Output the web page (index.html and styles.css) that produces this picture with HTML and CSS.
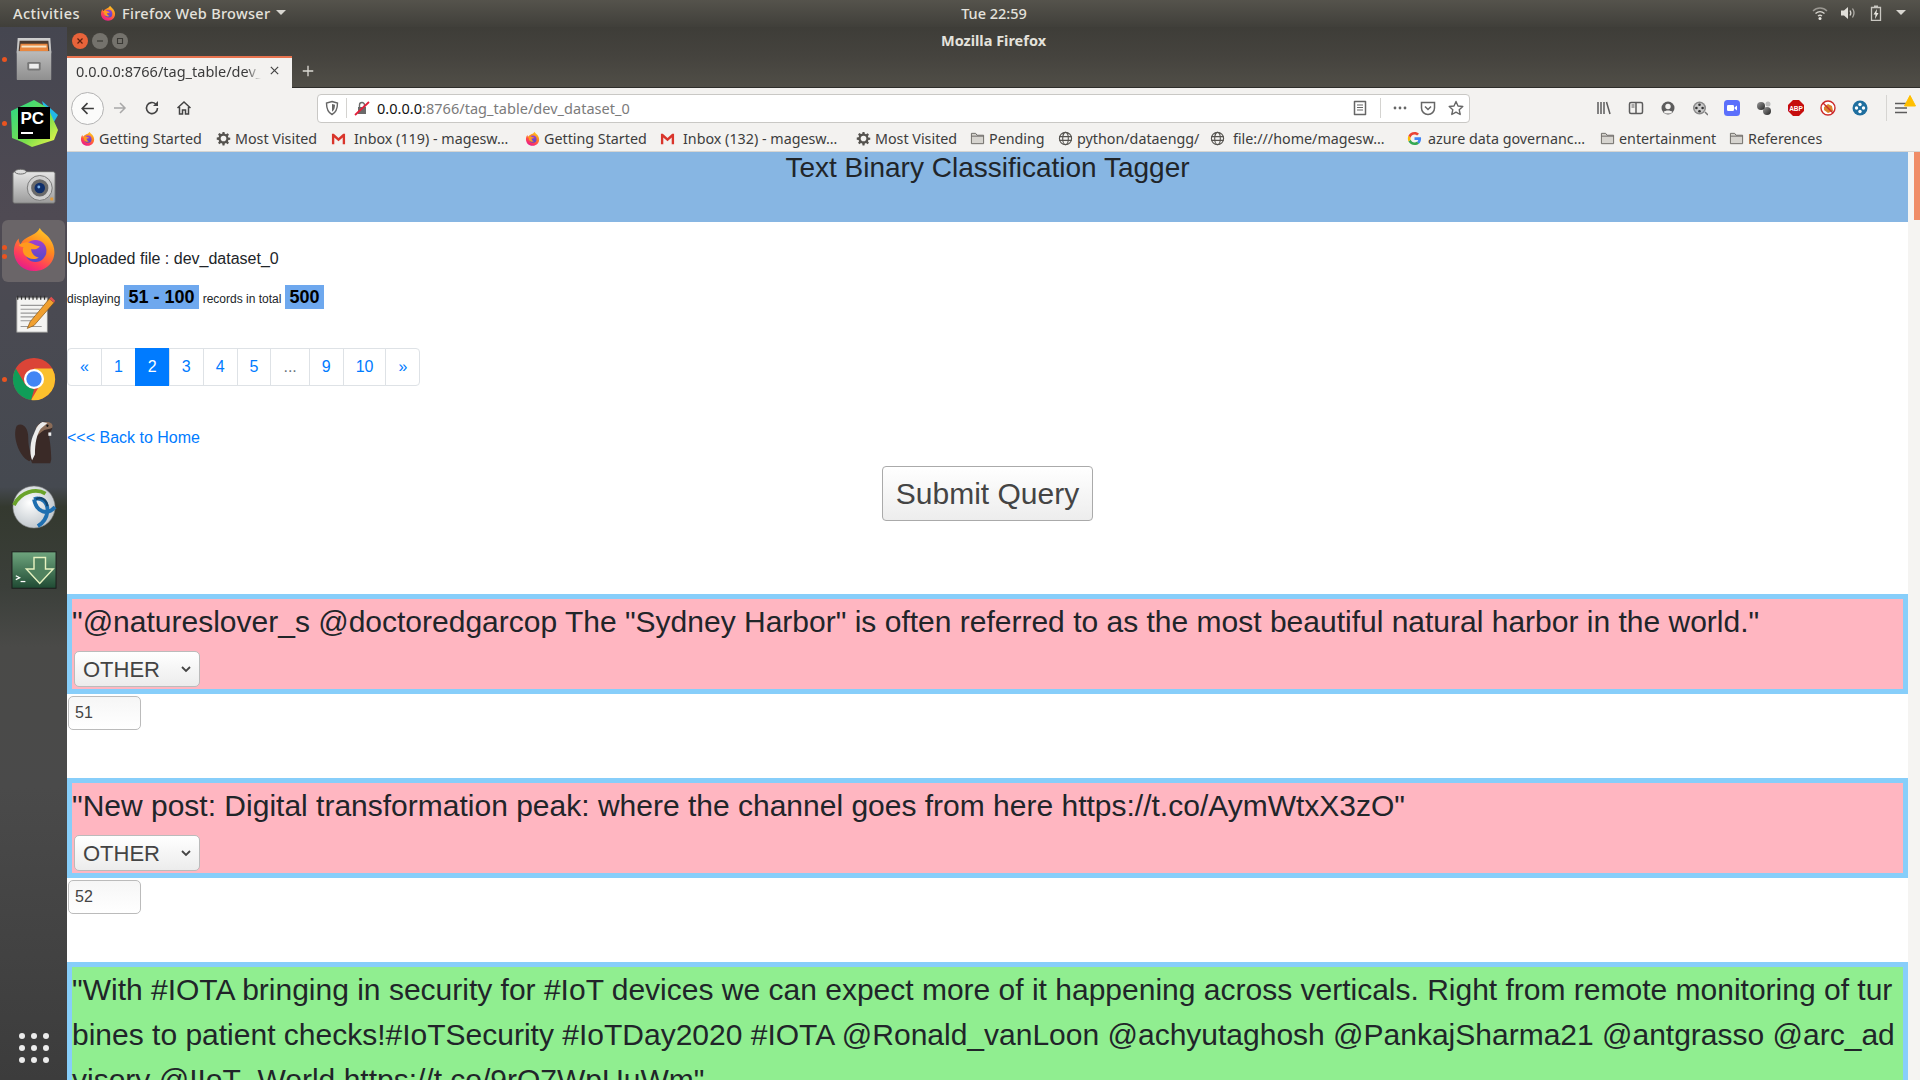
FILE: index.html
```html
<!DOCTYPE html>
<html lang="en">
<head>
<meta charset="utf-8">
<title>Mozilla Firefox</title>
<link rel="stylesheet" href="styles.css">
</head>
<body>
<svg class="defs" aria-hidden="true">
  <defs>
    <linearGradient id="ffBody" x1="0.8" y1="0" x2="0.3" y2="1"><stop offset="0" stop-color="#ffd02c"/><stop offset="0.4" stop-color="#ff8a1e"/><stop offset="0.75" stop-color="#ff3d5c"/><stop offset="1" stop-color="#e31b8e"/></linearGradient>
    <linearGradient id="ffCore" x1="0.5" y1="0" x2="0.5" y2="1"><stop offset="0" stop-color="#a13fd0"/><stop offset="1" stop-color="#4f4bc8"/></linearGradient>
    <linearGradient id="pcBg" x1="0" y1="0" x2="1" y2="1"><stop offset="0" stop-color="#21d789"/><stop offset="0.6" stop-color="#7ee04c"/><stop offset="1" stop-color="#fcf84a"/></linearGradient>
    <linearGradient id="cab" x1="0" y1="0" x2="0" y2="1"><stop offset="0" stop-color="#cfcfcf"/><stop offset="1" stop-color="#8f8f8f"/></linearGradient>
    <linearGradient id="cam" x1="0" y1="0" x2="0" y2="1"><stop offset="0" stop-color="#e6e6e6"/><stop offset="1" stop-color="#9a9a9a"/></linearGradient>
    <linearGradient id="term" x1="0" y1="0" x2="0" y2="1"><stop offset="0" stop-color="#6fa57e"/><stop offset="1" stop-color="#1f4a33"/></linearGradient>
    <linearGradient id="ball" x1="0" y1="0" x2="1" y2="1"><stop offset="0" stop-color="#9a9a9a"/><stop offset="1" stop-color="#222"/></linearGradient>
    <radialGradient id="glob" cx="0.4" cy="0.4" r="0.7"><stop offset="0" stop-color="#fff"/><stop offset="1" stop-color="#b8c0c6"/></radialGradient>
    <symbol id="firefox" viewBox="0 0 48 48">
      <path d="M30 2c3 5 8 7 11 12 5 7 6 17 1 24-4 6-11 9-18 9C12 47 3 38 3 26c0-5 2-10 5-13 0 3 1 5 2 6 2-4 5-6 9-8 3-2 8-3 11-9z" fill="url(#ffBody)"/>
      <circle cx="25.500" cy="26" r="11.500" fill="url(#ffCore)"/>
      <path d="M8 20c4-3 9-4 13-2 3 1 5 3 9 3-2 3-6 4-9 3 0 4 3 8 8 9-5 3-12 1-15-3-2-3-2-6-1-8-2 0-4-1-5-2z" fill="#ff9a1e"/>
    </symbol>
    <symbol id="gear" viewBox="0 0 16 16">
      <path fill="#55534f" d="M7 1h2l.4 2 1.300.5 1.700-1.100 1.400 1.400-1.100 1.700.5 1.300 2 .4v2l-2 .4-.5 1.300 1.100 1.700-1.400 1.400-1.700-1.100-1.300.5-.4 2H7l-.4-2-1.300-.5-1.700 1.100-1.400-1.400 1.100-1.700-.5-1.300-2-.4V7l2-.4.5-1.300-1.100-1.700 1.400-1.400 1.700 1.100 1.300-.5z"/>
      <circle cx="8" cy="8" r="3" fill="#f3f2f0"/>
    </symbol>
    <symbol id="gmail" viewBox="0 0 16 16">
      <path fill="#f3f2f0" d="M1 3h14v11H1z"/>
      <path fill="#d9352b" d="M1 3h2l5 4.500L13 3h2v11h-2.500V7L8 11 3.500 7v7H1z"/>
    </symbol>
    <symbol id="folder" viewBox="0 0 16 16">
      <path fill="#d6d4cf" stroke="#6b6964" d="M1.500 13.500v-11h4.500l1.500 2h7v9z"/>
      <path fill="none" stroke="#6b6964" d="M1.500 5.500h13"/>
    </symbol>
    <symbol id="globe" viewBox="0 0 16 16">
      <g fill="none" stroke="#55534f" stroke-width="1.200"><circle cx="8" cy="8" r="6.500"/><ellipse cx="8" cy="8" rx="3" ry="6.500"/><path d="M1.500 6h13M1.500 10h13"/></g>
    </symbol>
    <symbol id="google" viewBox="0 0 16 16">
      <path fill="#4285f4" d="M15 8.200c0-.6 0-1-.1-1.500H8v2.800h4c-.2 1-.7 1.700-1.500 2.300l2.300 1.800C14.200 12.300 15 10.400 15 8.200z"/>
      <path fill="#34a853" d="M8 15c2 0 3.600-.6 4.800-1.800L10.500 11.500c-.6.400-1.500.7-2.500.7-1.900 0-3.500-1.300-4.100-3L1.500 11c1.200 2.400 3.600 4 6.500 4z"/>
      <path fill="#fbbc05" d="M3.900 9.200C3.600 8.300 3.600 7.500 3.900 6.700L1.500 5c-.8 1.700-.8 3.900 0 6z"/>
      <path fill="#ea4335" d="M8 3.800c1.100 0 2 .4 2.800 1.100l2-2C11.600 1.700 10 1 8 1 5.100 1 2.700 2.600 1.500 5l2.400 1.800C4.500 5 6.100 3.800 8 3.800z"/>
    </symbol>
  </defs>
</svg>

<header class="topbar">
  <span class="activities">Activities</span>
  <span class="appmenu">
    <svg class="ico16" viewBox="0 0 16 16"><use href="#firefox"/></svg>
    <span>Firefox Web Browser</span>
    <span class="caret"></span>
  </span>
  <span class="clock">Tue 22:59</span>
  <span class="tray">
    <svg class="tray-ico" viewBox="0 0 16 16"><g fill="none" stroke="#d8d6d0" stroke-width="1.400"><path d="M1 6c4-4 10-4 14 0" opacity=".55"/><path d="M3.500 8.500c3-2.500 6-2.500 9 0"/><path d="M6 11c1.300-1 2.700-1 4 0"/></g><circle cx="8" cy="13.500" r="1.500" fill="#e8e6e0"/></svg>
    <svg class="tray-ico" viewBox="0 0 16 16"><path fill="#e0ded8" d="M1 5.500h3L8 2v12l-4-3.500H1z"/><g fill="none" stroke="#d8d6d0" stroke-width="1.300"><path d="M10 5.500c1 1.500 1 3.500 0 5"/><path d="M12.500 3.500c2 3 2 6 0 9" opacity=".7"/></g></svg>
    <svg class="tray-ico" viewBox="0 0 16 16"><path fill="none" stroke="#c9c7c1" stroke-width="1.300" d="M3.500 2.500h9v13h-9z"/><path fill="#c9c7c1" d="M6 .5h4v2H6z"/><path fill="#e8e6e0" d="M9 4L5.500 9.500h2L7 14l3.500-6h-2z"/></svg>
    <span class="caret"></span>
  </span>
</header>

<div class="desktop">
  <nav class="dock">
    <div class="dock-item">
      <svg class="dock-ico" viewBox="0 0 48 48"><path fill="url(#cab)" d="M7 2h34l1 14v29a1 1 0 0 1-1 1H7a1 1 0 0 1-1-1V16z"/><path fill="#4a3a30" d="M9 5h30l1 11H8z"/><path fill="#e9873f" d="M10 8h28l1 8H9z"/><path fill="#f6e4c8" d="M11 10h26v2H11z"/><path fill="#b9b9b9" d="M6 16h36v2H6z"/><rect x="17" y="27" width="14" height="9" rx="1.500" fill="#777"/><rect x="19" y="29" width="10" height="5" fill="#eee"/></svg>
      <span class="run-dot"></span>
    </div>
    <div class="dock-item">
      <svg class="dock-ico dock-ico-big" viewBox="0 0 52 52"><path fill="#22b8e8" d="M34 4l16 14-8 14z"/><path fill="url(#pcBg)" d="M3 14L26 3l14 8 10 22-4 10-22 7-10-5-10-4z"/><rect x="10" y="10" width="32" height="32" fill="#000"/><text class="pc-text" x="12.500" y="27">PC</text><rect x="13" y="35" width="12" height="2" fill="#fff"/></svg>
      <span class="run-dot"></span>
    </div>
    <div class="dock-item">
      <svg class="dock-ico" viewBox="0 0 48 48"><rect x="2" y="8" width="44" height="33" rx="2" fill="url(#cam)" stroke="#666"/><ellipse cx="10" cy="8" rx="6" ry="2.500" fill="#ddd" stroke="#666"/><circle cx="30" cy="25" r="13" fill="#cfcfcf" stroke="#777"/><circle cx="30" cy="25" r="9" fill="#6a6a6a"/><circle cx="30" cy="25" r="5.500" fill="#0f2f6b"/><circle cx="29" cy="24" r="1.500" fill="#7ab0e8"/><rect x="41" y="35" width="3" height="3" fill="#e09a3a"/></svg>
    </div>
    <div class="dock-item dock-active">
      <svg class="dock-ico" viewBox="0 0 48 48"><use href="#firefox"/></svg>
      <span class="run-dot dot-a"></span>
      <span class="run-dot dot-b"></span>
    </div>
    <div class="dock-item">
      <svg class="dock-ico" viewBox="0 0 48 48"><path fill="#f4f4f2" stroke="#888" d="M6 6h32v36H6z"/><path d="M7 4v4M11 4v4M15 4v4M19 4v4M23 4v4M27 4v4M31 4v4M35 4v4" stroke="#333" stroke-width="1.300"/><path d="M10 14h24M10 18h20M10 22h24M10 26h16M10 30h12M10 36h22" stroke="#999" stroke-width="1.200"/><path fill="#f0a030" stroke="#805010" stroke-width=".7" d="M40 7l5 4-21 24-7 3 3-7z"/><path fill="#e05050" d="M40 7l2-2 4 4-1 2z"/></svg>
    </div>
    <div class="dock-item">
      <svg class="dock-ico" viewBox="0 0 48 48"><circle cx="24" cy="24" r="22" fill="#db4437"/><path fill="#fbc02d" d="M24 13h19a22 22 0 0 1-22 33l10-17z"/><path fill="#0f9d58" d="M5 13l10 17 9 5-3 11A22 22 0 0 1 5 13z"/><circle cx="24" cy="24" r="10.500" fill="#fff"/><circle cx="24" cy="24" r="8" fill="#4285f4"/></svg>
      <span class="run-dot"></span>
    </div>
    <div class="dock-item">
      <svg class="dock-ico" viewBox="0 0 48 48"><path fill="#3a2a27" d="M6 6c6-4 12 2 12 12 0 8 1 14 5 22l-4 3C8 38 1 16 6 6z"/><path fill="#3a2a27" d="M22 45c-4-8-2-21 2-29 2-5 3-12 8-14 5-1 10 1 11 6 0 3-3 5-4 6 2 8 3 20 3 27l-1 4z"/><path fill="#8a6c58" d="M26 8c3-5 8-6 13-6 4 1 5 3 4 6-3 2-7 1-9 3-3 2-6 5-8 6z"/><path fill="#ececec" d="M33 2l5 1-7 6c-4 6-6 14-6 27l-3 6c-3-8-2-20 2-28 2-5 4-10 9-12z"/><rect x="39" y="13" width="3" height="3.500" fill="#f0f0f0"/><circle cx="38" cy="6" r="1.200" fill="#111"/></svg>
    </div>
    <div class="dock-item">
      <svg class="dock-ico" viewBox="0 0 48 48"><circle cx="24" cy="24" r="22" fill="url(#glob)" stroke="#777" stroke-width=".6"/><path fill="none" stroke="#6aa32a" stroke-width="4" d="M3 22C10 8 26 4 36 10"/><path fill="none" stroke="#1f6fb0" stroke-width="4" d="M24 16c7-3 15 3 14 13-1 8-5 12-10 15M46 24C38 33 27 30 24 16"/><path fill="none" stroke="#14456e" stroke-width="2.500" d="M26 16c4-3 11-1 12 7"/></svg>
    </div>
    <div class="dock-item">
      <svg class="dock-ico" viewBox="0 0 48 48"><rect x="1" y="4" width="46" height="38" fill="url(#term)" stroke="#1b1b1b"/><path fill="#50825f" stroke="#e6f2c0" stroke-width="1.500" d="M24 10h12v12h8L30 37 16 22h8z"/><path d="M5 29l4 2-4 2" fill="none" stroke="#fff" stroke-width="1.300"/><path d="M10 35h5" stroke="#fff" stroke-width="1.300"/></svg>
    </div>
    <div class="apps-grid">
      <i></i><i></i><i></i><i></i><i></i><i></i><i></i><i></i><i></i>
    </div>
  </nav>

  <div class="window">
    <div class="titlebar">
      <div class="winbtns">
        <span class="winbtn winbtn-close"><svg viewBox="0 0 16 16"><path d="M5.500 5.500l5 5M10.500 5.500l-5 5" stroke="#5a2010" stroke-width="1.200"/></svg></span>
        <span class="winbtn"><svg viewBox="0 0 16 16"><path d="M5 8h6" stroke="#3a3935" stroke-width="1.200"/></svg></span>
        <span class="winbtn"><svg viewBox="0 0 16 16"><path d="M5.500 5.500h5v5h-5z" fill="none" stroke="#3a3935" stroke-width="1.100"/></svg></span>
      </div>
      <span class="wintitle">Mozilla Firefox</span>
    </div>
    <div class="tabbar">
      <div class="tab">
        <span class="tab-label">0.0.0.0:8766/tag_table/dev_</span>
        <svg class="tab-x" viewBox="0 0 12 12"><path d="M2 2l8 8M10 2l-8 8" stroke="#444" stroke-width="1.300"/></svg>
      </div>
      <svg class="newtab" viewBox="0 0 16 16"><path d="M8 2v12M2 8h12" stroke="#dcdad4" stroke-width="1.500"/></svg>
    </div>
    <div class="navbar">
      <span class="backbtn"><svg viewBox="0 0 16 16"><path d="M14 8H3M8 3L3 8l5 5" fill="none" stroke="#3d3d3d" stroke-width="1.500"/></svg></span>
      <svg class="nav-ico" viewBox="0 0 16 16"><path d="M2 8h11M8 3l5 5-5 5" fill="none" stroke="#a8a8a8" stroke-width="1.500"/></svg>
      <svg class="nav-ico nav-reload" viewBox="0 0 16 16"><path d="M13.500 8a5.500 5.500 0 1 1-1.800-4" fill="none" stroke="#444" stroke-width="1.600"/><path d="M14 1v5H9z" fill="#444"/></svg>
      <svg class="nav-ico nav-home" viewBox="0 0 16 16"><path d="M1.500 8L8 2l6.500 6M3.500 7v7h3v-4h3v4h3V7" fill="none" stroke="#444" stroke-width="1.500"/></svg>
      <div class="urlbar">
        <svg class="url-ico url-shield" viewBox="0 0 16 16"><path d="M8 1.500l5.500 1.500c0 6-1.500 9.500-5.500 11.500C4 12.500 2.500 9 2.500 3z" fill="none" stroke="#666" stroke-width="1.400"/><path d="M8 4l3 .8c0 3.500-.8 5.500-3 7z" fill="#666"/></svg>
        <span class="url-sep"></span>
        <svg class="url-ico" viewBox="0 0 16 16"><path d="M4 7h8v7H4z" fill="#6a6a6a"/><path d="M5.500 7V5a2.500 2.500 0 0 1 5 0v2" fill="none" stroke="#6a6a6a" stroke-width="1.400"/><path d="M1 15L15 2" stroke="#e2203a" stroke-width="1.800"/></svg>
        <span class="url-text"><b>0.0.0.0</b>:8766/tag_table/dev_dataset_0</span>
        <svg class="url-ico" viewBox="0 0 16 16"><path d="M2.500 1.500h11v13h-11z" fill="none" stroke="#666" stroke-width="1.500" stroke-linejoin="round"/><path d="M5 5h6M5 7.500h6M5 10h6" stroke="#666" stroke-width="1.100"/></svg>
        <span class="url-sep url-sep-r"></span>
        <svg class="url-ico url-dots" viewBox="0 0 16 16"><circle cx="3" cy="8" r="1.400" fill="#666"/><circle cx="8" cy="8" r="1.400" fill="#666"/><circle cx="13" cy="8" r="1.400" fill="#666"/></svg>
        <svg class="url-ico url-pocket" viewBox="0 0 16 16"><path d="M1.500 2.500h13V8a6.500 6.500 0 0 1-13 0z" fill="none" stroke="#666" stroke-width="1.500"/><path d="M5 6.500l3 3 3-3" fill="none" stroke="#666" stroke-width="1.500"/></svg>
        <svg class="url-ico url-star" viewBox="0 0 16 16"><path d="M8 1.500l2 4.500 4.800.5-3.600 3.200 1 4.800L8 12.100l-4.200 2.400 1-4.800L1.200 6.500 6 6z" fill="none" stroke="#666" stroke-width="1.400" stroke-linejoin="round"/></svg>
      </div>
      <div class="tools">
        <svg class="tool" viewBox="0 0 16 16"><path d="M2 2v12M5 2v12M8 2v12M10.500 2l3.500 12" stroke="#5c5c5c" stroke-width="1.500" fill="none"/></svg>
        <svg class="tool" viewBox="0 0 16 16"><rect x="1.500" y="2.500" width="13" height="11" rx="1.500" fill="none" stroke="#5c5c5c" stroke-width="1.500"/><path d="M8 3v10" stroke="#5c5c5c" stroke-width="1.500"/><path d="M3.500 5h3M3.500 7h3" stroke="#5c5c5c"/></svg>
        <svg class="tool" viewBox="0 0 16 16"><circle cx="8" cy="8" r="6.500" fill="#5c5c5c"/><circle cx="8" cy="6.500" r="2.700" fill="#f3f2f0"/><path d="M3.500 12c2-2 7-2 9 0l-2 1.500H5.500z" fill="#f3f2f0"/></svg>
        <svg class="tool" viewBox="0 0 16 16"><path d="M13 12l3 3" stroke="#777" stroke-width="1.500"/><circle cx="7.500" cy="8" r="6.500" fill="#8a8a8a"/><circle cx="7.500" cy="8" r="5" fill="#c9c9c9"/><g fill="#333"><circle cx="7.500" cy="4.800" r="1.300"/><circle cx="7.500" cy="11.200" r="1.300"/><circle cx="4.400" cy="8" r="1.300"/><circle cx="10.600" cy="8" r="1.300"/></g></svg>
        <svg class="tool" viewBox="0 0 16 16"><rect width="16" height="16" rx="3.500" fill="#5b6ffb"/><rect x="3" y="5" width="7" height="6" rx="1.200" fill="#fff"/><path d="M10.500 7.500L13 5.500v5l-2.500-2z" fill="#fff"/></svg>
        <svg class="tool" viewBox="0 0 16 16"><circle cx="12" cy="4" r="2.500" fill="#bbb"/><circle cx="11" cy="11" r="4" fill="url(#ball)"/><circle cx="5" cy="6" r="4" fill="url(#ball)"/></svg>
        <svg class="tool" viewBox="0 0 16 16"><path d="M5 0h6l5 5v6l-5 5H5l-5-5V5z" fill="#c60d0d"/><text class="abp-text" x="8" y="10.800">ABP</text></svg>
        <svg class="tool" viewBox="0 0 16 16"><circle cx="8" cy="8" r="7" fill="#fff" stroke="#cc2a2a" stroke-width="1.400"/><path d="M4 7l4-3 4 2 1 5-5 2-4-3z" fill="#d9822b"/><path d="M3 3l10 10" stroke="#cc2a2a" stroke-width="1.400"/></svg>
        <svg class="tool" viewBox="0 0 16 16"><circle cx="8" cy="8" r="7.500" fill="#1f6f9f"/><g fill="#fff"><circle cx="8" cy="4.500" r="1.700"/><circle cx="8" cy="11.500" r="1.700"/><circle cx="4.500" cy="8" r="1.700"/><circle cx="11.500" cy="8" r="1.700"/></g></svg>
        <span class="tool-sep"></span>
        <span class="menu-wrap">
          <svg class="tool" viewBox="0 0 16 16"><path d="M2 3.500h12M2 8h12M2 12.500h12" stroke="#5c5c5c" stroke-width="1.700"/></svg>
          <svg class="warn" viewBox="0 0 12 12"><path d="M6 .5l5.500 10.500H.5z" fill="#ffbf00" stroke="#ffbf00" stroke-linejoin="round"/></svg>
        </span>
      </div>
    </div>
    <div class="bookmarks">
      <span class="bm"><svg viewBox="0 0 16 16"><use href="#firefox"/></svg><span>Getting Started</span></span>
      <span class="bm"><svg viewBox="0 0 16 16"><use href="#gear"/></svg><span>Most Visited</span></span>
      <span class="bm bm-wide"><svg viewBox="0 0 16 16"><use href="#gmail"/></svg><span>Inbox (119) - magesw…</span></span>
      <span class="bm"><svg viewBox="0 0 16 16"><use href="#firefox"/></svg><span>Getting Started</span></span>
      <span class="bm bm-wide"><svg viewBox="0 0 16 16"><use href="#gmail"/></svg><span>Inbox (132) - magesw…</span></span>
      <span class="bm"><svg viewBox="0 0 16 16"><use href="#gear"/></svg><span>Most Visited</span></span>
      <span class="bm"><svg viewBox="0 0 16 16"><use href="#folder"/></svg><span>Pending</span></span>
      <span class="bm"><svg viewBox="0 0 16 16"><use href="#globe"/></svg><span>python/dataengg/</span></span>
      <span class="bm bm-wide"><svg viewBox="0 0 16 16"><use href="#globe"/></svg><span>file:///home/magesw…</span></span>
      <span class="bm bm-mid"><svg viewBox="0 0 16 16"><use href="#google"/></svg><span>azure data governanc…</span></span>
      <span class="bm"><svg viewBox="0 0 16 16"><use href="#folder"/></svg><span>entertainment</span></span>
      <span class="bm"><svg viewBox="0 0 16 16"><use href="#folder"/></svg><span>References</span></span>
    </div>
    <div class="viewport">
      <main class="page">
        <h1 class="page-title">Text Binary Classification Tagger</h1>
        <p class="uploaded">Uploaded file : dev_dataset_0</p>
        <p class="counts"><small>displaying</small> <mark>51 - 100</mark> <small>records in total</small> <mark>500</mark></p>
        <ul class="pagination">
          <li><a href="#">«</a></li>
          <li><a href="#">1</a></li>
          <li class="active"><a href="#">2</a></li>
          <li><a href="#">3</a></li>
          <li><a href="#">4</a></li>
          <li><a href="#">5</a></li>
          <li class="disabled"><a href="#">...</a></li>
          <li><a href="#">9</a></li>
          <li><a href="#">10</a></li>
          <li><a href="#">»</a></li>
        </ul>
        <a class="back" href="#">&lt;&lt;&lt; Back to Home</a>
        <div class="submit-row"><button class="submit" type="button">Submit Query</button></div>
        <section class="record">
          <div class="rec-box rec-other">
            <p class="rec-text">"@natureslover_s @doctoredgarcop The "Sydney Harbor" is often referred to as the most beautiful natural harbor in the world."</p>
            <select class="rec-select"><option>OTHER</option></select>
          </div>
          <input class="rec-id" type="text" value="51">
        </section>
        <section class="record">
          <div class="rec-box rec-other">
            <p class="rec-text">"New post: Digital transformation peak: where the channel goes from here https://t.co/AymWtxX3zO"</p>
            <select class="rec-select"><option>OTHER</option></select>
          </div>
          <input class="rec-id" type="text" value="52">
        </section>
        <section class="record">
          <div class="rec-box rec-iot">
            <p class="rec-text">"With #IOTA bringing in security for #IoT devices we can expect more of it happening across verticals. Right from remote monitoring of turbines to patient checks!#IoTSecurity #IoTDay2020 #IOTA @Ronald_vanLoon @achyutaghosh @PankajSharma21 @antgrasso @arc_advisory @IIoT_World https://t.co/9rO7WpUuWm"</p>
            <select class="rec-select"><option>IOT</option></select>
          </div>
        </section>
      </main>
      <div class="scrollbar"><span class="thumb"></span></div>
    </div>
  </div>
</div>
</body>
</html>
```
FILE: styles.css
```css
* { box-sizing: border-box; }
html, body { margin: 0; height: 100%; overflow: hidden; }
body {
  display: flex;
  flex-direction: column;
  width: 1920px;
  height: 1080px;
  background: #fff;
  font-family: "Liberation Sans", Arial, sans-serif;
  color: #212529;
}
.defs { display: block; width: 0; height: 0; overflow: hidden; }

/* GNOME top bar */
.topbar {
  flex: 0 0 27px;
  display: flex;
  align-items: center;
  position: relative;
  padding: 0 0 2px 13px;
  background: linear-gradient(#55534c, #403f3a);
  color: #e4e2dc;
  font: 500 14.500px "Noto Sans", sans-serif;
}
.activities { width: 87px; letter-spacing: .45px; }
.appmenu { display: flex; align-items: center; gap: 6px; letter-spacing: .3px; }
.ico16 { width: 16px; height: 16px; }
.caret {
  width: 0; height: 0;
  border-left: 5px solid transparent;
  border-right: 5px solid transparent;
  border-top: 5px solid #d8d6d0;
}
.clock { position: absolute; left: 960px; width: 68px; text-align: center; }
.tray { margin-left: auto; display: flex; align-items: center; gap: 12px; padding-right: 14px; }
.tray-ico { width: 16px; height: 16px; }

.desktop { flex: 1; display: flex; min-height: 0; }

/* Ubuntu dock */
.dock {
  flex: 0 0 67px;
  display: flex;
  flex-direction: column;
  background: linear-gradient(#454650 0, #4f4a53 190px, #4a4a52 280px, #454950 460px, #34392f 480px, #3b3f3a 560px, #4a4a48 620px, #4a4a4a 760px, #3c3c3c 1053px);
}
.dock-item {
  flex: 0 0 64px;
  position: relative;
  display: flex;
  align-items: center;
  justify-content: center;
  padding-bottom: 1px;
}
.dock-ico { width: 46px; height: 46px; display: block; }
.dock-ico-big { width: 52px; height: 52px; }
.dock-active { flex-basis: 62px; background: #6a6568; border-radius: 6px; margin: 1px 2px; padding-bottom: 4px; }
.run-dot {
  position: absolute;
  left: 2px;
  top: 30px;
  width: 5px;
  height: 5px;
  border-radius: 50%;
  background: #e95420;
}
.dot-a { left: 0; top: 25px; }
.dot-b { left: 0; top: 34px; }
.pc-text { font: 700 17px "Liberation Sans", sans-serif; fill: #fff; }
.apps-grid {
  margin-top: auto;
  margin-bottom: 17px;
  align-self: center;
  display: grid;
  grid-template-columns: repeat(3, 6px);
  gap: 6px;
}
.apps-grid i { width: 6px; height: 6px; border-radius: 50%; background: #ececec; }

/* Firefox window */
.window { flex: 1; min-width: 0; display: flex; flex-direction: column; }
.titlebar {
  flex: 0 0 29px;
  position: relative;
  display: flex;
  align-items: center;
  justify-content: center;
  padding-bottom: 4px;
  background: linear-gradient(#3e3d38, #45433e);
  color: #e4e2dc;
  font: 700 14.500px "Noto Sans", sans-serif;
}
.winbtns { position: absolute; left: 5px; top: 6px; display: flex; gap: 4px; }
.winbtn { width: 16px; height: 16px; border-radius: 50%; background: #74726c; display: block; }
.winbtn svg { display: block; width: 16px; height: 16px; }
.winbtn-close { background: #e8633a; }
.tabbar {
  flex: 0 0 32px;
  display: flex;
  align-items: stretch;
  background: linear-gradient(#45433e, #504e47);
  border-bottom: 1px solid #2e2d2a;
}
.tab {
  flex: 0 0 225px;
  width: 225px;
  min-width: 0;
  display: flex;
  align-items: center;
  padding: 0 12px 5px 9px;
  background: #f3f2f0;
  border-top: 2px solid #e8734f;
  margin-bottom: -1px;
  color: #3b3b3b;
  font: 14.500px "Noto Sans", sans-serif;
}
.tab-label {
  flex: 1;
  min-width: 0;
  white-space: nowrap;
  -webkit-mask-image: linear-gradient(90deg, #000 92%, transparent);
  mask-image: linear-gradient(90deg, #000 92%, transparent);
}
.tab-x { width: 11px; height: 11px; margin-left: 8px; flex: none; }
.newtab { width: 14px; height: 14px; margin: 8px 0 0 9px; }

.navbar {
  flex: 0 0 38px;
  display: flex;
  align-items: center;
  padding-top: 2px;
  background: #f3f2f0;
}
.backbtn {
  width: 33px;
  height: 33px;
  margin-left: 4px;
  border-radius: 50%;
  border: 1px solid #b3b3b3;
  background: #fbfbfa;
  display: flex;
  align-items: center;
  justify-content: center;
}
.backbtn svg { width: 17px; height: 17px; }
.nav-ico { width: 16px; height: 16px; margin-left: 8px; }
.nav-reload { margin-left: 16px; }
.nav-home { margin-left: 16px; }
.urlbar {
  width: 1153px;
  height: 29px;
  margin-left: 125px;
  display: flex;
  align-items: center;
  background: #fff;
  border: 1px solid #c9c8c5;
  border-radius: 4px;
  color: #7b7b7b;
  font: 14.500px "Noto Sans", sans-serif;
}
.url-ico { width: 16px; height: 16px; flex: none; margin-left: 7px; }
.url-shield { margin-left: 6px; }
.url-sep { width: 1px; height: 20px; background: #d4d3d0; margin-left: 6px; }
.url-text { flex: 1; margin-left: 7px; white-space: nowrap; letter-spacing: .03px; }
.url-text b { font-weight: 400; color: #111; }
.url-sep-r { margin-left: 12px; }
.url-dots { margin-left: 11px; }
.url-pocket { margin-left: 12px; }
.url-star { margin-left: 12px; margin-right: 5px; }
.tools { display: flex; align-items: center; margin-left: 126px; gap: 16px; }
.tool { width: 16px; height: 16px; display: block; }
.abp-text { font: 700 6.500px "Liberation Sans", sans-serif; fill: #fff; text-anchor: middle; }
.tool-sep { width: 1px; height: 26px; background: #d6d5d2; margin: 0 -10px 0 2px; }
.menu-wrap { position: relative; display: block; }
.warn { position: absolute; left: 11px; top: -5px; width: 12px; height: 12px; }

.bookmarks {
  flex: 0 0 26px;
  display: grid;
  grid-template-columns: 136px 115px 194px 135px 196px 114px 88px 152px 197px 193px 129px 120px;
  align-items: center;
  padding-left: 13px;
  background: #f3f2f0;
  border-bottom: 1px solid #d6d5d2;
  color: #3d3d3d;
  font: 14.300px "Noto Sans", sans-serif;
}
.bm { display: flex; align-items: center; gap: 4px; min-width: 0; white-space: nowrap; }
.bm-wide { gap: 8px; }
.bm-mid { gap: 6px; }
.bm svg { flex: none; width: 15px; height: 15px; }

/* page viewport */
.viewport { flex: 1; min-height: 0; display: flex; overflow: hidden; }
.page { flex: 1; min-width: 0; overflow: hidden; }
.scrollbar { flex: 0 0 12px; background: #f5f4f2; padding: 0 0 0 6px; }
.thumb { display: block; width: 6px; height: 68px; background: #f08d67; }

.page-title {
  margin: 0;
  height: 70px;
  background: #87b6e3;
  text-align: center;
  font-weight: 400;
  font-size: 28px;
  line-height: 32px;
  color: #212529;
}
.uploaded { margin: 25px 0 0; font-size: 16px; line-height: 24px; }
.counts { margin: 14px 0 0; font-size: 13px; line-height: 25px; }
.counts small { font-size: 12px; }
mark { background: #6ea8ee; font-weight: 700; font-size: 18px; padding: 2px 4.500px; color: #000; }
.pagination { display: flex; list-style: none; margin: 36px 0 0; padding: 0; }
.pagination a {
  display: block;
  padding: 8px 12px;
  margin-left: -1px;
  line-height: 20px;
  font-size: 16px;
  color: #007bff;
  background: #fff;
  border: 1px solid #dee2e6;
  text-decoration: none;
}
.pagination li:first-child a { margin-left: 0; border-radius: 4px 0 0 4px; }
.pagination li:last-child a { border-radius: 0 4px 4px 0; }
.pagination .active a { background: #007bff; border-color: #007bff; color: #fff; }
.pagination .disabled a { color: #6c757d; }
.back { display: block; margin-top: 40px; font-size: 16px; line-height: 24px; color: #007bff; text-decoration: none; }
.submit-row { display: flex; justify-content: center; margin-top: 16px; }
.submit {
  width: 211px;
  height: 55px;
  padding: 0;
  border: 1px solid #aaa;
  border-radius: 4px;
  background: linear-gradient(#fff, #ededed);
  color: #444;
  font: 30px "Liberation Sans", sans-serif;
}
.record { margin-top: 73px; height: 135px; }
.record + .record { margin-top: 49px; }
.rec-box { border: 5px solid #87cefa; padding-bottom: 2px; }
.rec-other { background: #ffb6c1; }
.rec-iot { background: #90ee90; }
.rec-text { margin: 0; font-size: 30px; line-height: 45px; word-break: break-all; }
.rec-select {
  display: block;
  width: 126px;
  height: 36px;
  margin: 7px 0 0 2px;
  padding: 0 0 0 8px;
  border: 1px solid #bbb;
  border-radius: 5px;
  appearance: none;
  -webkit-appearance: none;
  background:
    url("data:image/svg+xml,%3Csvg xmlns='http://www.w3.org/2000/svg' width='10' height='7'%3E%3Cpath d='M1 1l4 4 4-4' fill='none' stroke='%23444' stroke-width='1.800'/%3E%3C/svg%3E") no-repeat right 8px center,
    linear-gradient(#fff, #ececec);
  color: #444;
  font: 22px "Liberation Sans", sans-serif;
}
.rec-id {
  display: block;
  width: 73px;
  height: 34px;
  margin: 2px 0 0 1px;
  padding: 0 0 0 6px;
  border: 1px solid #bbb;
  border-radius: 5px;
  background: linear-gradient(#f6f6f6, #fff);
  color: #444;
  font: 16px "Liberation Sans", sans-serif;
}
```
